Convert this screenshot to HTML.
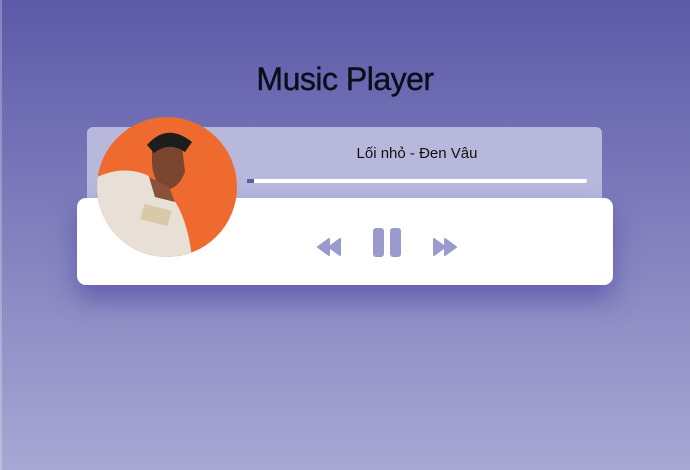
<!DOCTYPE html>
<html><head><meta charset="utf-8"><style>
html,body{margin:0;padding:0}
body{width:690px;height:470px;overflow:hidden;position:relative;background:linear-gradient(#5c5aa8,#a9a7d3);font-family:"Liberation Sans","Noto Sans CJK SC",sans-serif}
.lb{position:absolute;left:0;top:0;width:2px;height:470px;background:rgba(255,255,255,.25)}
h1{position:absolute;top:61px;left:0;width:690px;text-align:center;margin:0;font-size:32px;font-weight:normal;color:#0d0d1a;letter-spacing:-0.5px;-webkit-text-stroke:0.4px #0d0d1a}
.info{position:absolute;left:87px;top:127px;width:515px;height:80px;background:#b8b8dd;border-radius:6px}
.song{position:absolute;left:247px;width:340px;top:145px;text-align:center;font-size:15px;color:#111}
.bar{position:absolute;left:247px;top:179px;width:340px;height:4px;background:#fff;border-radius:2px}
.bar i{position:absolute;left:0;top:0;width:7px;height:4px;background:#5e5ca8}
.card{position:absolute;left:77px;top:198px;width:536px;height:87px;background:#fff;border-radius:9px;box-shadow:0 14px 26px rgba(70,65,160,.6)}
.av{position:absolute;left:97px;top:117px;width:140px;height:140px;border-radius:50%;overflow:hidden;background:#ee6a2e}
</style></head><body>
<div class="lb"></div>
<h1>Music Player</h1>
<div class="info"></div>
<div class="song">Lối nhỏ - Đen Vâu</div>
<div class="bar"><i></i></div>
<div class="card"></div>
<div class="av"><svg width="140" height="140" viewBox="0 0 140 140">
<path d="M0 60 Q25 48 50 58 L75 80 Q90 100 95 140 L0 140Z" fill="#e8e0d6"/>
<path d="M55 30 Q70 20 85 30 L88 55 Q80 75 65 72 Q55 60 55 45Z" fill="#7a4630"/>
<path d="M50 28 Q70 5 95 25 L88 35 Q72 24 57 36Z" fill="#1d1d1d"/>
<path d="M52 60 L72 70 L78 85 L58 80Z" fill="#8a5238"/>
<rect x="45" y="90" width="28" height="16" fill="#d8c9a8" transform="rotate(15 59 98)"/>
</svg></div>
<svg style="position:absolute;left:317px;top:238px" width="24" height="18" viewBox="0 0 24 18"><path d="M12 1 L1 9 L12 17Z M23 1 L12 9 L23 17Z" fill="#9a9acf" stroke="#9a9acf" stroke-linejoin="round" stroke-width="2"/></svg>
<svg style="position:absolute;left:373px;top:228px" width="29" height="29"><rect x="0" y="0" width="11" height="29" rx="3" fill="#9a9acf"/><rect x="17" y="0" width="11" height="29" rx="3" fill="#9a9acf"/></svg>
<svg style="position:absolute;left:433px;top:238px" width="24" height="18" viewBox="0 0 24 18"><path d="M1 1 L12 9 L1 17Z M12 1 L23 9 L12 17Z" fill="#9a9acf" stroke="#9a9acf" stroke-linejoin="round" stroke-width="2"/></svg>
</body></html>
